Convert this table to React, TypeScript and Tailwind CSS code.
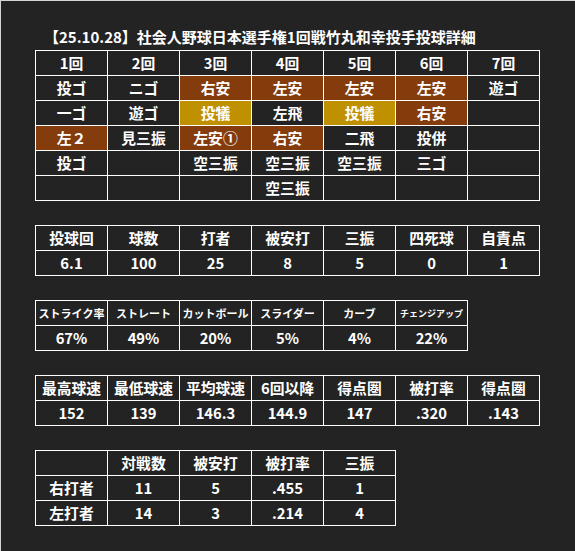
import React from 'react';

type Cell = { t: string; c?: 'b' | 'g' };

const B = (t: string): Cell => ({ t, c: 'b' });
const G = (t: string): Cell => ({ t, c: 'g' });
const N = (t: string): Cell => ({ t });

const innings: Cell[][] = [
  ['1回', '2回', '3回', '4回', '5回', '6回', '7回'].map(N),
  [N('投ゴ'), N('ニゴ'), B('右安'), B('左安'), B('左安'), B('左安'), N('遊ゴ')],
  [N('一ゴ'), N('遊ゴ'), G('投犠'), N('左飛'), G('投犠'), B('右安'), N('')],
  [B('左２'), N('見三振'), B('左安①'), B('右安'), N('二飛'), N('投併'), N('')],
  [N('投ゴ'), N(''), N('空三振'), N('空三振'), N('空三振'), N('三ゴ'), N('')],
  [N(''), N(''), N(''), N('空三振'), N(''), N(''), N('')],
];

const cellBg = (c?: 'b' | 'g') =>
  c === 'b' ? 'bg-[#843c0c]' : c === 'g' ? 'bg-[#bf9000]' : 'bg-[#232323]';

function Grid({ cols, rows, small }: { cols: string; rows: Cell[][]; small?: string[] }) {
  return (
    <div className={`grid ${cols} w-max gap-px bg-white p-px`}>
      {rows.map((row, ri) =>
        row.map((cell, ci) => (
          <div
            key={`${ri}-${ci}`}
            className={`flex h-[24px] items-center justify-center whitespace-nowrap pt-px font-bold text-white ${cellBg(cell.c)} ${
              ri === 0 && small ? small[ci] : 'text-[14.8px]'
            }`}
          >
            {cell.t}
          </div>
        ))
      )}
    </div>
  );
}

const basic = [
  ['投球回', '球数', '打者', '被安打', '三振', '四死球', '自責点'],
  ['6.1', '100', '25', '8', '5', '0', '1'],
].map((r) => r.map(N));

const pitches = [
  ['ストライク率', 'ストレート', 'カットボール', 'スライダー', 'カーブ', 'チェンジアップ'],
  ['67%', '49%', '20%', '5%', '4%', '22%'],
].map((r) => r.map(N));

const speed = [
  ['最高球速', '最低球速', '平均球速', '6回以降', '得点圏', '被打率', '得点圏'],
  ['152', '139', '146.3', '144.9', '147', '.320', '.143'],
].map((r) => r.map(N));

const batters = [
  ['', '対戦数', '被安打', '被打率', '三振'],
  ['右打者', '11', '5', '.455', '1'],
  ['左打者', '14', '3', '.214', '4'],
].map((r) => r.map(N));

export default function App() {
  return (
    <div
      className="h-[551px] w-[575px] overflow-hidden border-l border-t border-[#d4d4d4] bg-[#232323] pl-[34px] pt-[23px]"
      style={{ fontFamily: '"Noto Sans CJK JP", "Noto Sans", sans-serif' }}
    >
      <div className="h-[26px] pl-[9px] text-[15px] font-bold leading-[26px] text-white">
        【25.10.28】社会人野球日本選手権1回戦竹丸和幸投手投球詳細
      </div>
      <div className="flex flex-col gap-[24px]">
        <Grid cols="grid-cols-[repeat(7,71px)]" rows={innings} />
        <Grid cols="grid-cols-[repeat(7,71px)]" rows={basic} />
        <Grid
          cols="grid-cols-[repeat(6,71px)]"
          rows={pitches}
          small={['text-[11px]', 'text-[11px]', 'text-[11px]', 'text-[11px]', 'text-[11px]', 'text-[9px]']}
        />
        <Grid cols="grid-cols-[repeat(7,71px)]" rows={speed} />
        <Grid cols="grid-cols-[repeat(5,71px)]" rows={batters} />
      </div>
    </div>
  );
}
